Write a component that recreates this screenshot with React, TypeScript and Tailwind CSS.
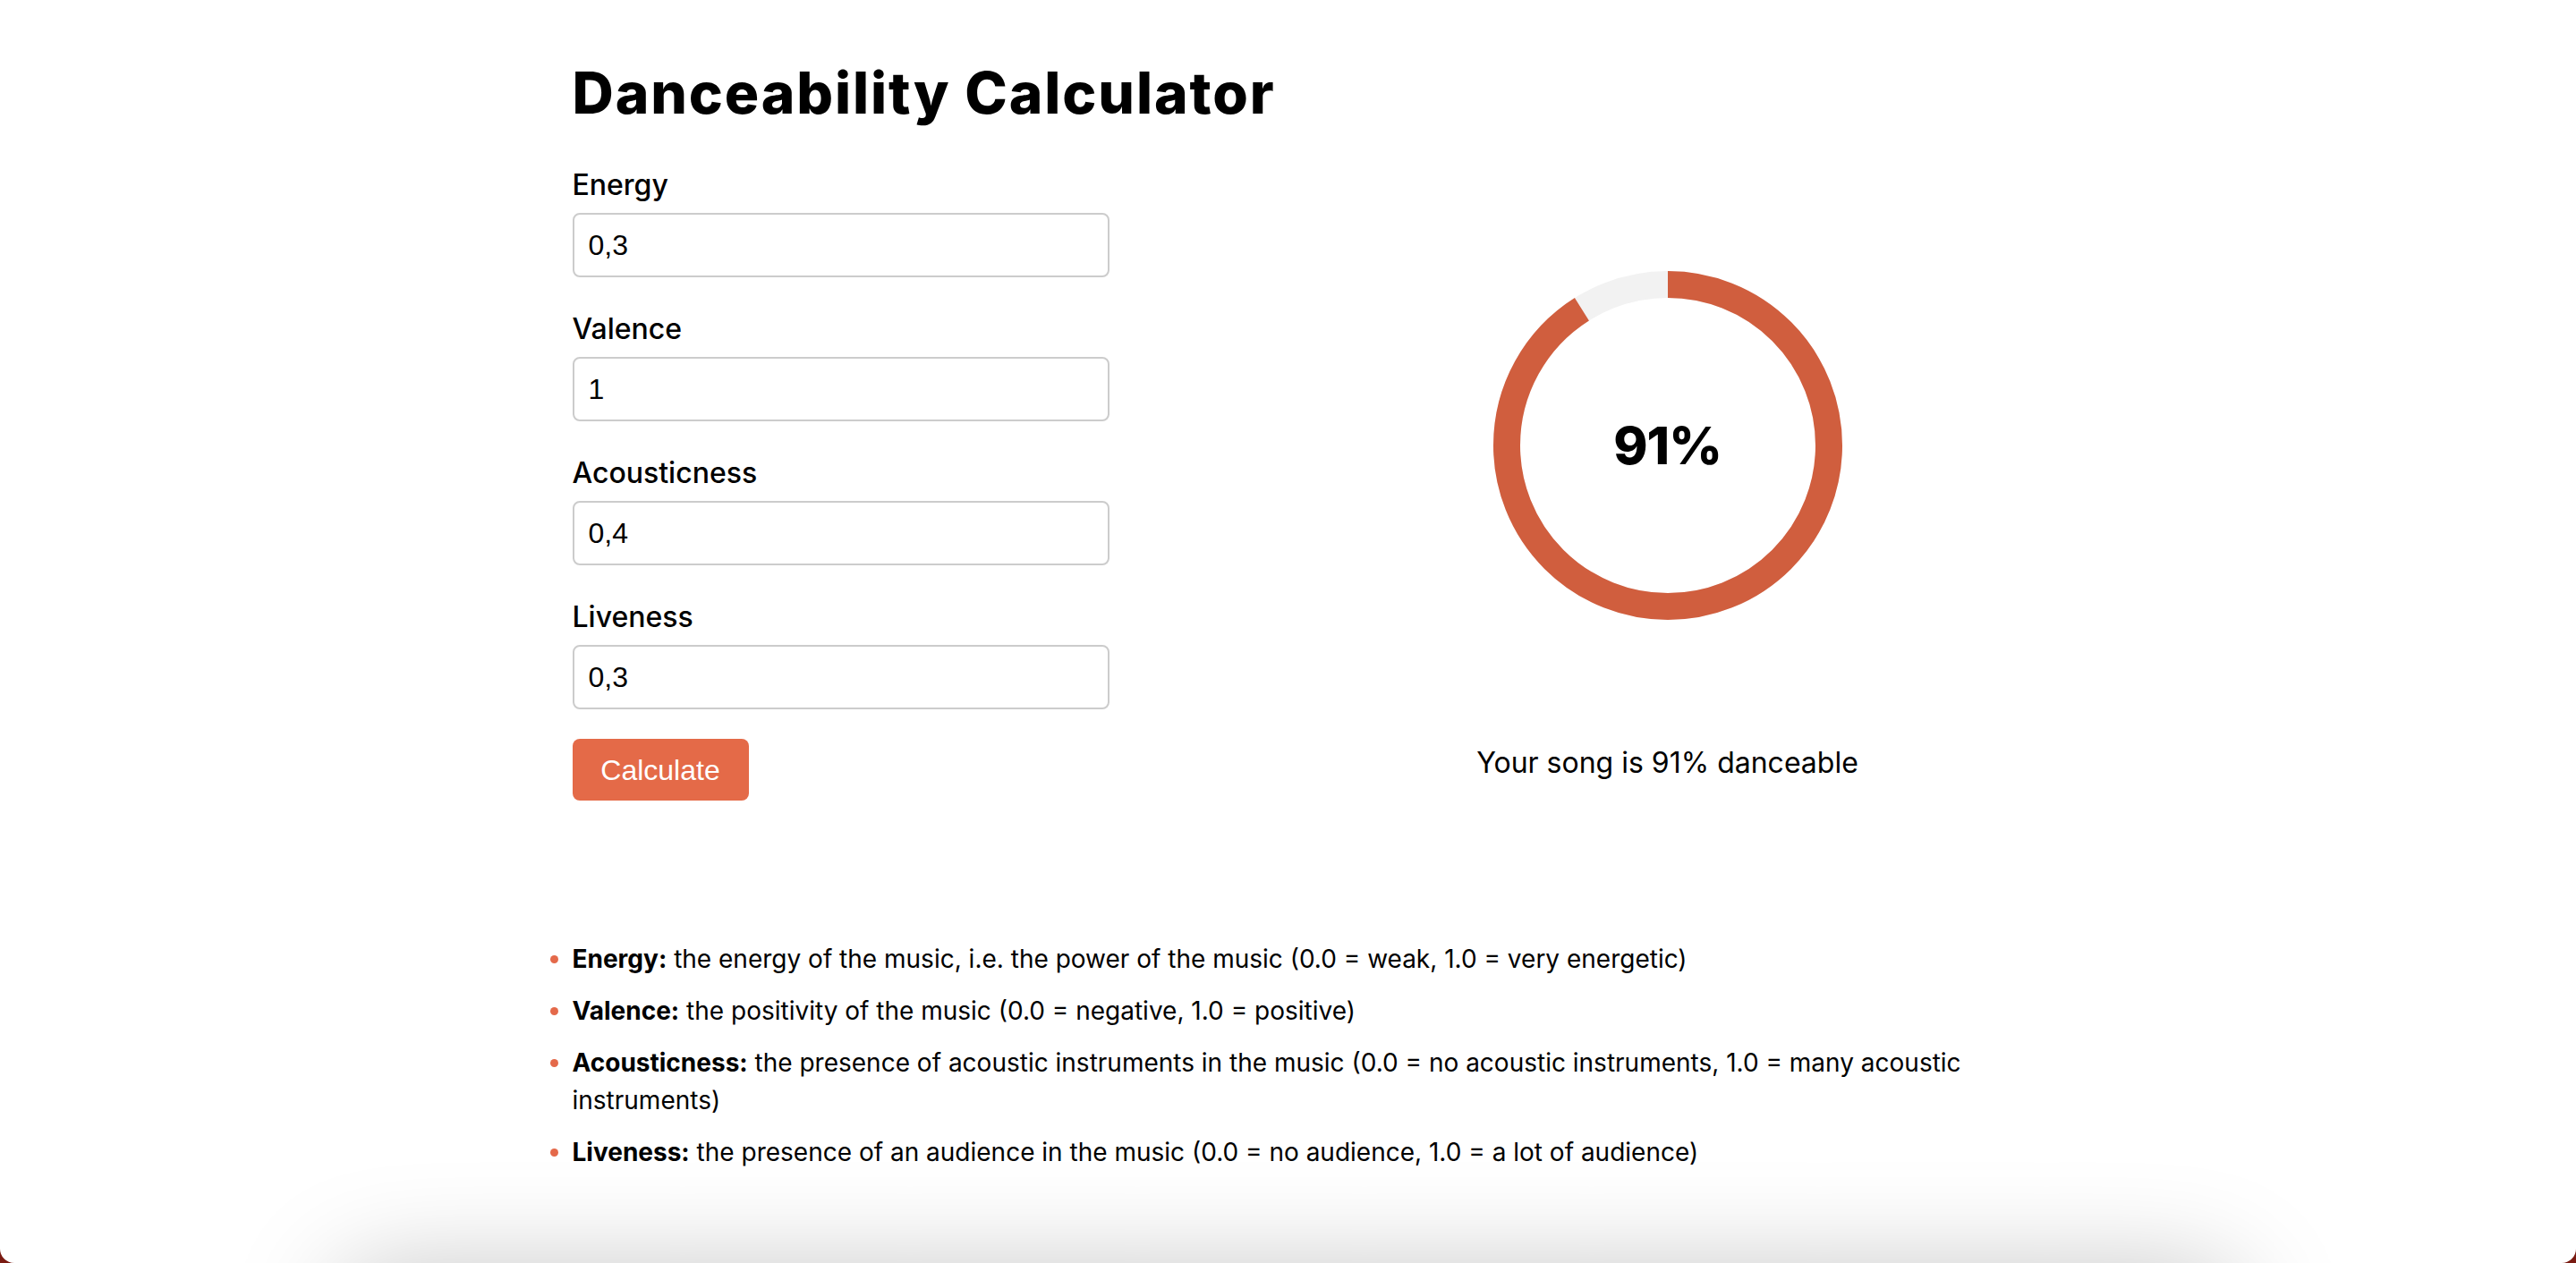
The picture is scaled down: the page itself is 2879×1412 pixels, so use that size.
import React from "react";

const fields = [
  { label: "Energy", value: "0,3" },
  { label: "Valence", value: "1" },
  { label: "Acousticness", value: "0,4" },
  { label: "Liveness", value: "0,3" },
];

const defs = [
  { term: "Energy:", text: " the energy of the music, i.e. the power of the music (0.0 = weak, 1.0 = very energetic)" },
  { term: "Valence:", text: " the positivity of the music (0.0 = negative, 1.0 = positive)" },
  { term: "Acousticness:", text: " the presence of acoustic instruments in the music (0.0 = no acoustic instruments, 1.0 = many acoustic instruments)" },
  { term: "Liveness:", text: " the presence of an audience in the music (0.0 = no audience, 1.0 = a lot of audience)" },
];

export default function App() {
  const r = 180;
  const c = 2 * Math.PI * r;
  const pct = 0.91;
  return (
    <div className="relative h-[1412px] overflow-hidden bg-[#7a1b12] font-['Inter',sans-serif] text-black">
      <div className="h-full rounded-b-[16px] bg-white">
        <div className="mx-auto w-[1600px] pt-[56px]">
          <h1 className="text-[64px] font-extrabold leading-[96px] tracking-[1.9px]">Danceability Calculator</h1>
          <div className="mt-[31px] flex">
            <div className="flex w-[600px] flex-col">
              {fields.map((f, i) => (
                <div key={f.label} className={i > 0 ? "mt-[34px]" : ""}>
                  <label className="block text-[32px] font-medium leading-[48px]">{f.label}</label>
                  <input
                    type="text"
                    defaultValue={f.value}
                    className="mt-[7px] block h-[72px] w-full rounded-[8px] border-2 border-[#cccccc] bg-white px-[16px] font-['Liberation_Sans',Arial,sans-serif] text-[32px] text-black outline-none"
                  />
                </div>
              ))}
              <button className="mt-[33px] h-[69px] w-[197px] rounded-[8px] bg-[#e46a48] font-['Liberation_Sans',Arial,sans-serif] text-[32px] text-white">
                Calculate
              </button>
            </div>
            <div className="ml-[374px] flex w-[500px] flex-col items-center pt-[120px]">
              <div className="grid place-items-center">
                <svg className="[grid-area:1/1]" width="390" height="390" viewBox="0 0 390 390">
                  <circle cx="195" cy="195" r={r} fill="none" stroke="#f2f2f2" strokeWidth="30" />
                  <circle
                    cx="195"
                    cy="195"
                    r={r}
                    fill="none"
                    stroke="#d05e3e"
                    strokeWidth="30"
                    strokeDasharray={`${c * pct} ${c}`}
                    transform="rotate(-90 195 195)"
                  />
                </svg>
                <span className="[grid-area:1/1] text-[58px] font-extrabold leading-none tracking-[-1px]">91%</span>
              </div>
              <p className="mt-[136px] text-[32px] leading-[48px]">Your song is 91% danceable</p>
            </div>
          </div>
          <ul className="mt-[156px] list-outside list-disc pl-0 marker:text-[#e4694a]">
            {defs.map((d) => (
              <li key={d.term} className="mb-[16px] text-[28px] leading-[42px]">
                <strong className="font-bold">{d.term}</strong>
                {d.text}
              </li>
            ))}
          </ul>
        </div>
      </div>
      <div className="absolute left-[380px] right-[380px] top-[1425px] h-[300px] rounded-[40px] bg-white shadow-[0_0_120px_0_rgba(0,0,0,0.26)]" />
    </div>
  );
}
